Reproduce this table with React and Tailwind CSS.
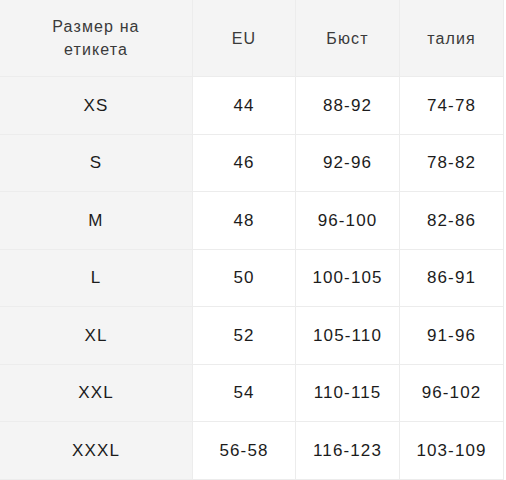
import React from "react";

const rows = [
  ["XS", "44", "88-92", "74-78"],
  ["S", "46", "92-96", "78-82"],
  ["M", "48", "96-100", "82-86"],
  ["L", "50", "100-105", "86-91"],
  ["XL", "52", "105-110", "91-96"],
  ["XXL", "54", "110-115", "96-102"],
  ["XXXL", "56-58", "116-123", "103-109"],
];

const Cell = ({ children, gray, header }) => (
  <div
    className={`flex items-center justify-center text-center border-r border-b border-[#ececec] ${
      gray ? "bg-[#f4f4f4]" : "bg-white"
    } ${header ? "text-[16px] text-[#3a3a3a] leading-[23px]" : "text-[17px] text-[#1c1c1c]"}`}
  >
    {children}
  </div>
);

const App = () => {
  return (
    <div
      lang="bg"
      className="w-[506px] h-[480px] bg-white overflow-hidden"
      style={{ fontFamily: '"Liberation Sans", Arial, sans-serif' }}
    >
      <div className="grid grid-cols-[193px_103px_104px_104px] grid-rows-[77px_repeat(7,57.5px)] tracking-[0.07em]">
        <Cell gray header>
          <span>
            Размер на
            <br />
            етикета
          </span>
        </Cell>
        <Cell gray header>EU</Cell>
        <Cell gray header>Бюст</Cell>
        <Cell gray header>талия</Cell>
        {rows.map((r) => (
          <React.Fragment key={r[0]}>
            <Cell gray>{r[0]}</Cell>
            <Cell>{r[1]}</Cell>
            <Cell>{r[2]}</Cell>
            <Cell>{r[3]}</Cell>
          </React.Fragment>
        ))}
      </div>
    </div>
  );
};

export default App;
